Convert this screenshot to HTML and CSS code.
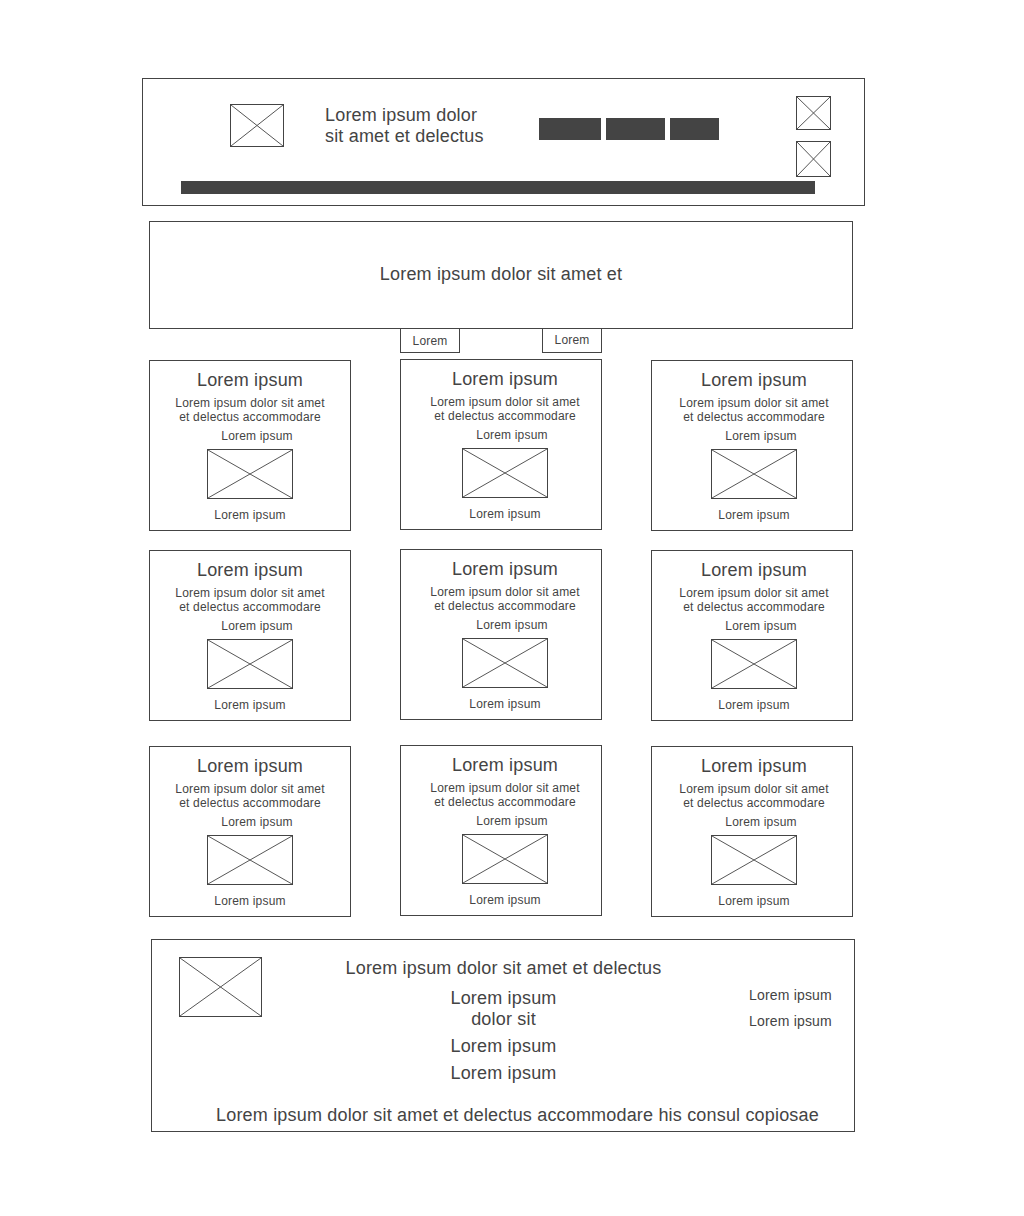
FILE: index.html
```html
<!DOCTYPE html>
<html lang="en">
<head>
<meta charset="UTF-8">
<meta name="viewport" content="width=device-width, initial-scale=1.0">
<title>Wireframe</title>
<link rel="stylesheet" href="styles.css">
</head>
<body>

<div class="page">

    <!-- cabecera -->
    <header class="header">
        <div class="header-top">
            <div class="ph logo"><svg viewBox="0 0 100 100" preserveAspectRatio="none"><line x1="0" y1="0" x2="100" y2="100"/><line x1="100" y1="0" x2="0" y2="100"/></svg></div>
            <div class="header-title">Lorem ipsum dolor<br>sit amet et delectus</div>
            <div class="nav">
                <span class="nav-btn w1"></span>
                <span class="nav-btn w2"></span>
                <span class="nav-btn w3"></span>
            </div>
            <div class="header-icons">
                <div class="ph icon"><svg viewBox="0 0 100 100" preserveAspectRatio="none"><line x1="0" y1="0" x2="100" y2="100"/><line x1="100" y1="0" x2="0" y2="100"/></svg></div>
                <div class="ph icon tall"><svg viewBox="0 0 100 100" preserveAspectRatio="none"><line x1="0" y1="0" x2="100" y2="100"/><line x1="100" y1="0" x2="0" y2="100"/></svg></div>
            </div>
        </div>
        <div class="header-bar"></div>
    </header>

    <section class="banner">Lorem ipsum dolor sit amet et</section>

    <div class="tabs">
        <span class="tab first">Lorem</span>
        <span class="tab second">Lorem</span>
    </div>

    <!-- tarjetas -->
    <div class="grid">
        <div class="card">
            <div class="card-title">Lorem ipsum</div>
            <div class="card-text">Lorem ipsum dolor sit amet<br>et delectus accommodare</div>
            <div class="card-label">Lorem ipsum</div>
            <div class="ph card-img"><svg viewBox="0 0 100 100" preserveAspectRatio="none"><line x1="0" y1="0" x2="100" y2="100"/><line x1="100" y1="0" x2="0" y2="100"/></svg></div>
            <div class="card-foot">Lorem ipsum</div>
        </div>
        <div class="card mid">
            <div class="card-title">Lorem ipsum</div>
            <div class="card-text">Lorem ipsum dolor sit amet<br>et delectus accommodare</div>
            <div class="card-label">Lorem ipsum</div>
            <div class="ph card-img"><svg viewBox="0 0 100 100" preserveAspectRatio="none"><line x1="0" y1="0" x2="100" y2="100"/><line x1="100" y1="0" x2="0" y2="100"/></svg></div>
            <div class="card-foot">Lorem ipsum</div>
        </div>
        <div class="card right">
            <div class="card-title">Lorem ipsum</div>
            <div class="card-text">Lorem ipsum dolor sit amet<br>et delectus accommodare</div>
            <div class="card-label">Lorem ipsum</div>
            <div class="ph card-img"><svg viewBox="0 0 100 100" preserveAspectRatio="none"><line x1="0" y1="0" x2="100" y2="100"/><line x1="100" y1="0" x2="0" y2="100"/></svg></div>
            <div class="card-foot">Lorem ipsum</div>
        </div>

        <div class="card">
            <div class="card-title">Lorem ipsum</div>
            <div class="card-text">Lorem ipsum dolor sit amet<br>et delectus accommodare</div>
            <div class="card-label">Lorem ipsum</div>
            <div class="ph card-img"><svg viewBox="0 0 100 100" preserveAspectRatio="none"><line x1="0" y1="0" x2="100" y2="100"/><line x1="100" y1="0" x2="0" y2="100"/></svg></div>
            <div class="card-foot">Lorem ipsum</div>
        </div>
        <div class="card mid">
            <div class="card-title">Lorem ipsum</div>
            <div class="card-text">Lorem ipsum dolor sit amet<br>et delectus accommodare</div>
            <div class="card-label">Lorem ipsum</div>
            <div class="ph card-img"><svg viewBox="0 0 100 100" preserveAspectRatio="none"><line x1="0" y1="0" x2="100" y2="100"/><line x1="100" y1="0" x2="0" y2="100"/></svg></div>
            <div class="card-foot">Lorem ipsum</div>
        </div>
        <div class="card right">
            <div class="card-title">Lorem ipsum</div>
            <div class="card-text">Lorem ipsum dolor sit amet<br>et delectus accommodare</div>
            <div class="card-label">Lorem ipsum</div>
            <div class="ph card-img"><svg viewBox="0 0 100 100" preserveAspectRatio="none"><line x1="0" y1="0" x2="100" y2="100"/><line x1="100" y1="0" x2="0" y2="100"/></svg></div>
            <div class="card-foot">Lorem ipsum</div>
        </div>

        <div class="card row3">
            <div class="card-title">Lorem ipsum</div>
            <div class="card-text">Lorem ipsum dolor sit amet<br>et delectus accommodare</div>
            <div class="card-label">Lorem ipsum</div>
            <div class="ph card-img"><svg viewBox="0 0 100 100" preserveAspectRatio="none"><line x1="0" y1="0" x2="100" y2="100"/><line x1="100" y1="0" x2="0" y2="100"/></svg></div>
            <div class="card-foot">Lorem ipsum</div>
        </div>
        <div class="card mid row3">
            <div class="card-title">Lorem ipsum</div>
            <div class="card-text">Lorem ipsum dolor sit amet<br>et delectus accommodare</div>
            <div class="card-label">Lorem ipsum</div>
            <div class="ph card-img"><svg viewBox="0 0 100 100" preserveAspectRatio="none"><line x1="0" y1="0" x2="100" y2="100"/><line x1="100" y1="0" x2="0" y2="100"/></svg></div>
            <div class="card-foot">Lorem ipsum</div>
        </div>
        <div class="card right row3">
            <div class="card-title">Lorem ipsum</div>
            <div class="card-text">Lorem ipsum dolor sit amet<br>et delectus accommodare</div>
            <div class="card-label">Lorem ipsum</div>
            <div class="ph card-img"><svg viewBox="0 0 100 100" preserveAspectRatio="none"><line x1="0" y1="0" x2="100" y2="100"/><line x1="100" y1="0" x2="0" y2="100"/></svg></div>
            <div class="card-foot">Lorem ipsum</div>
        </div>
    </div>

    <!-- pie -->
    <footer class="footer">
        <div class="footer-main">
            <div class="ph footer-img"><svg viewBox="0 0 100 100" preserveAspectRatio="none"><line x1="0" y1="0" x2="100" y2="100"/><line x1="100" y1="0" x2="0" y2="100"/></svg></div>
            <div class="footer-center">
                <div class="footer-heading">Lorem ipsum dolor sit amet et delectus</div>
                <div class="footer-links">
                    <div class="footer-link">Lorem ipsum dolor sit</div>
                    <div class="footer-link">Lorem ipsum</div>
                    <div class="footer-link">Lorem ipsum</div>
                </div>
            </div>
            <div class="footer-right">
                <div>Lorem ipsum</div>
                <div>Lorem ipsum</div>
            </div>
        </div>
        <div class="footer-bottom">Lorem ipsum dolor sit amet et delectus accommodare his consul copiosae</div>
    </footer>

</div>

</body>
</html>
```

FILE: styles.css
```css
/* Estilos del wireframe */
body {
    margin: 0;
    font-family: "Liberation Sans", Arial, sans-serif;
    letter-spacing: 0.18px;
    color: #444;
    background: #fff;
}
.page {
    padding-top: 78px;
    padding-bottom: 84px;
}

/* placeholder de imagen con la X */
.ph {
    box-sizing: border-box;
    border: 1px solid #444;
    overflow: hidden;
}
.ph svg {
    display: block;
    width: 100%;
    height: 100%;
}
.ph line {
    stroke: #555;
    stroke-width: 1;
    vector-effect: non-scaling-stroke;
}

/* cabecera */
.header {
    box-sizing: border-box;
    width: 723px;
    height: 128px;
    margin-left: 142px;
    border: 1px solid #444;
    padding-top: 17px;
}
.header-top {
    display: flex;
    align-items: flex-start;
}
.logo {
    width: 54px;
    height: 43px;
    margin-left: 87px;
    margin-top: 8px;
}
.header-title {
    width: 214px;
    margin-left: 41px;
    margin-top: 9px;
    font-size: 18px;
    line-height: 21px;
}
.nav {
    display: flex;
    gap: 5px;
    margin-top: 22px;
}
.nav-btn {
    display: block;
    height: 22px;
    background-color: #444;
}
.nav-btn.w1 { width: 62px; }
.nav-btn.w2 { width: 59px; }
.nav-btn.w3 { width: 49px; }
.header-icons {
    display: flex;
    flex-direction: column;
    gap: 11px;
    margin-left: 77px;
}
.icon {
    width: 35px;
    height: 34px;
}
.icon.tall {
    height: 36px;
}
.header-bar {
    width: 634px;
    height: 13px;
    margin-left: 38px;
    margin-top: 4px;
    background-color: #444;
}

/* banner */
.banner {
    box-sizing: border-box;
    width: 704px;
    height: 108px;
    margin-left: 149px;
    margin-top: 15px;
    border: 1px solid #444;
    display: flex;
    align-items: center;
    justify-content: center;
    font-size: 18px;
    padding-bottom: 2px;
}

/* pestañas */
.tabs {
    display: flex;
    margin-top: -1px;
    margin-left: 400px;
}
.tab {
    box-sizing: border-box;
    width: 60px;
    height: 25px;
    border: 1px solid #444;
    font-size: 12px;
    line-height: 22px;
    text-align: center;
}
.tab.first {
    padding-top: 1px;
}
.tab.second {
    margin-left: 82px;
}

/* tarjetas */
.grid {
    display: grid;
    grid-template-columns: 202px 202px 202px;
    column-gap: 49px;
    row-gap: 19px;
    margin-left: 149px;
    margin-top: 7px;
    align-items: start;
}
.card {
    box-sizing: border-box;
    height: 171px;
    border: 1px solid #444;
    padding: 9px 0 8px;
    display: flex;
    flex-direction: column;
    align-items: center;
    text-align: center;
}
.card.mid {
    margin-top: -1px;
    padding-left: 8px;
}
.card.right {
    padding-left: 4px;
}
.card.row3 {
    margin-top: 6px;
}
.card.mid.row3 {
    margin-top: 5px;
}
.card-title {
    font-size: 18px;
    line-height: 21px;
}
.card-text {
    margin-top: 5px;
    font-size: 12px;
    line-height: 14px;
}
.card-label {
    margin-top: 5px;
    padding-left: 14px;
    font-size: 12px;
    line-height: 14px;
}
.card-img {
    width: 86px;
    height: 50px;
    margin-top: 6px;
}
.card-foot {
    margin-top: 9px;
    font-size: 12px;
    line-height: 14px;
}

/* pie */
.footer {
    box-sizing: border-box;
    width: 704px;
    height: 193px;
    margin-left: 151px;
    margin-top: 22px;
    border: 1px solid #444;
    padding-top: 18px;
}
.footer-main {
    display: grid;
    grid-template-columns: 110px 483px 109px;
    align-items: start;
}
.footer-img {
    width: 83px;
    height: 60px;
    margin-left: 27px;
    margin-top: -1px;
}
.footer-center {
    text-align: center;
}
.footer-heading {
    font-size: 18px;
    line-height: 21px;
}
.footer-links {
    width: 112px;
    margin: 9px auto 0;
}
.footer-link {
    font-size: 18px;
    line-height: 21px;
    margin-bottom: 6px;
}
.footer-right {
    margin-top: 29px;
    padding-left: 4px;
    font-size: 14px;
    line-height: 16px;
    display: flex;
    flex-direction: column;
    gap: 10px;
}
.footer-bottom {
    margin-top: 15px;
    padding-left: 29px;
    text-align: center;
    font-size: 18px;
    line-height: 21px;
}
```
